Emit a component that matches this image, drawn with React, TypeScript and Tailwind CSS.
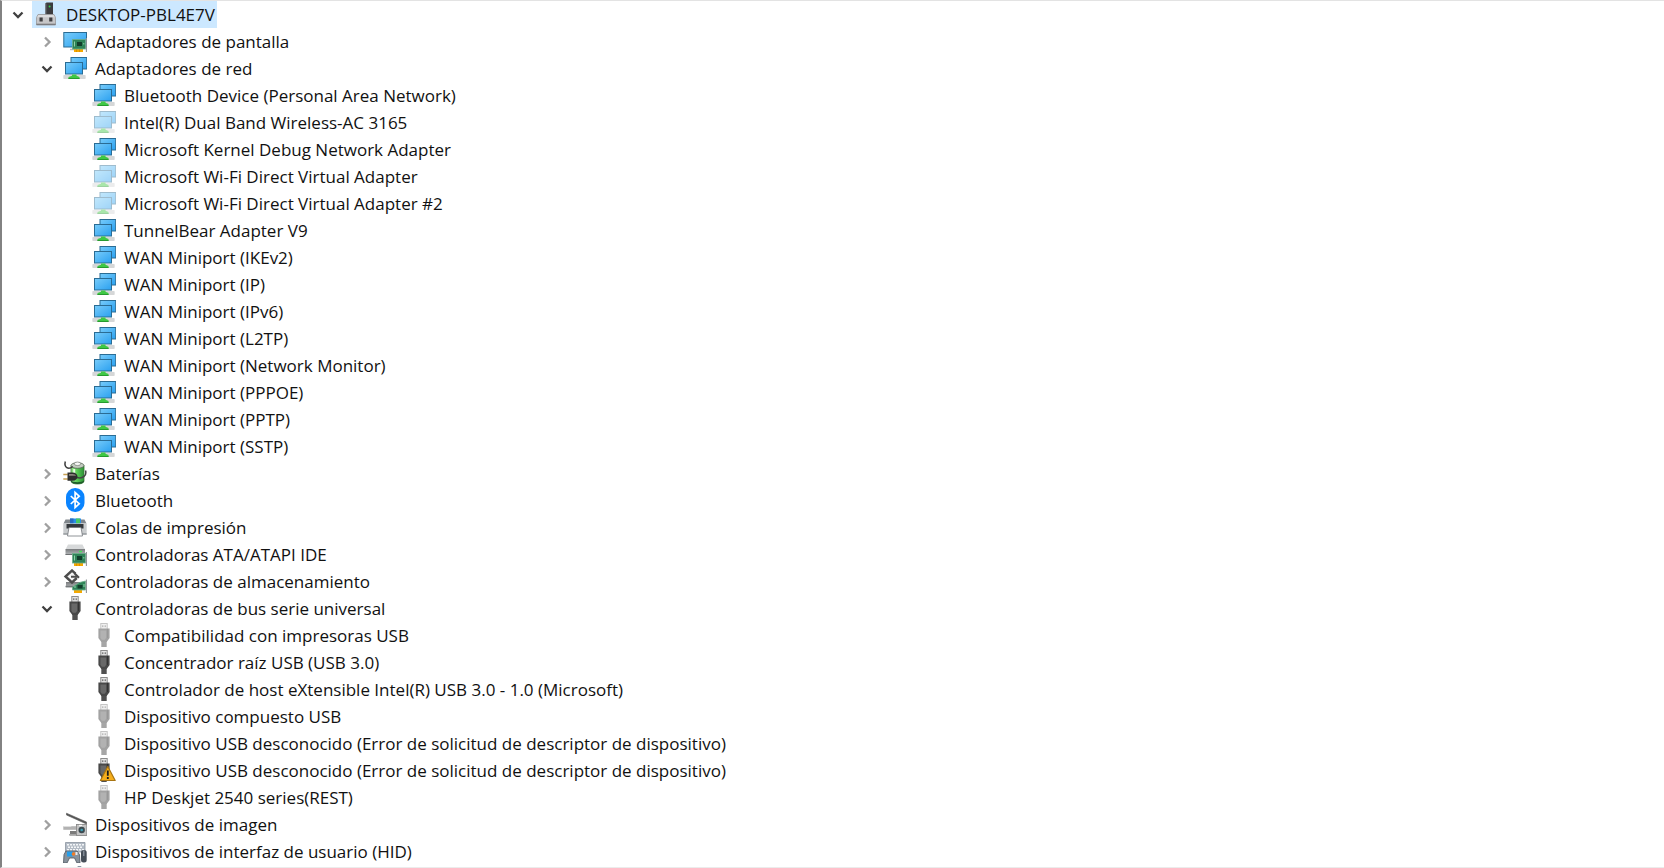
import { useState } from "react"
import type { ReactNode } from "react"
import { clsx } from "clsx"

type IconName =
  | "computer"
  | "display"
  | "network"
  | "battery"
  | "bluetooth"
  | "printer"
  | "ide"
  | "storage"
  | "usb"
  | "usbWarning"
  | "imaging"
  | "hid"
  | "sound"

interface DeviceNode {
  label: string
  icon: IconName
  faded?: boolean
  expanded?: boolean
  children?: DeviceNode[]
}

const categories: DeviceNode[] = [
  { label: "Adaptadores de pantalla", icon: "display", children: [] },
  {
    label: "Adaptadores de red",
    icon: "network",
    expanded: true,
    children: [
      { label: "Bluetooth Device (Personal Area Network)", icon: "network" },
      { label: "Intel(R) Dual Band Wireless-AC 3165", icon: "network", faded: true },
      { label: "Microsoft Kernel Debug Network Adapter", icon: "network" },
      { label: "Microsoft Wi-Fi Direct Virtual Adapter", icon: "network", faded: true },
      { label: "Microsoft Wi-Fi Direct Virtual Adapter #2", icon: "network", faded: true },
      { label: "TunnelBear Adapter V9", icon: "network" },
      { label: "WAN Miniport (IKEv2)", icon: "network" },
      { label: "WAN Miniport (IP)", icon: "network" },
      { label: "WAN Miniport (IPv6)", icon: "network" },
      { label: "WAN Miniport (L2TP)", icon: "network" },
      { label: "WAN Miniport (Network Monitor)", icon: "network" },
      { label: "WAN Miniport (PPPOE)", icon: "network" },
      { label: "WAN Miniport (PPTP)", icon: "network" },
      { label: "WAN Miniport (SSTP)", icon: "network" },
    ],
  },
  { label: "Baterías", icon: "battery", children: [] },
  { label: "Bluetooth", icon: "bluetooth", children: [] },
  { label: "Colas de impresión", icon: "printer", children: [] },
  { label: "Controladoras ATA/ATAPI IDE", icon: "ide", children: [] },
  { label: "Controladoras de almacenamiento", icon: "storage", children: [] },
  {
    label: "Controladoras de bus serie universal",
    icon: "usb",
    expanded: true,
    children: [
      { label: "Compatibilidad con impresoras USB", icon: "usb", faded: true },
      { label: "Concentrador raíz USB (USB 3.0)", icon: "usb" },
      { label: "Controlador de host eXtensible Intel(R) USB 3.0 - 1.0 (Microsoft)", icon: "usb" },
      { label: "Dispositivo compuesto USB", icon: "usb", faded: true },
      {
        label: "Dispositivo USB desconocido (Error de solicitud de descriptor de dispositivo)",
        icon: "usb",
        faded: true,
      },
      {
        label: "Dispositivo USB desconocido (Error de solicitud de descriptor de dispositivo)",
        icon: "usbWarning",
      },
      { label: "HP Deskjet 2540 series(REST)", icon: "usb", faded: true },
    ],
  },
  { label: "Dispositivos de imagen", icon: "imaging", children: [] },
  { label: "Dispositivos de interfaz de usuario (HID)", icon: "hid", children: [] },
  { label: "", icon: "sound" },
]

const root: DeviceNode = {
  label: "DESKTOP-PBL4E7V",
  icon: "computer",
  expanded: true,
  children: categories,
}

// Small green expansion card shared by several icons
function Card({ y }: { y: number }) {
  return (
    <g transform={`translate(0 ${y})`}>
      <rect x="11" y="8.5" width="9" height="3.5" fill="#f5a800" />
      <path d="M13.5 9v3M16.5 9v3" stroke="#c97f00" strokeWidth="0.6" />
      <rect x="9.5" y="-0.5" width="13" height="9.5" fill="#2f8458" stroke="#6fae8c" strokeWidth="0.8" />
      <rect x="14" y="2" width="5" height="4" fill="#123d2b" />
      <path d="M11.5 1.5v5M20.8 3v1.5" stroke="#8fd0a8" strokeWidth="1" />
      <path d="M23.4 -2v14" stroke="#8e9396" strokeWidth="1.1" />
    </g>
  )
}

function UsbPlug() {
  return (
    <g>
      <rect x="8.8" y="0.5" width="6.4" height="6" fill="#e4e4e4" stroke="#8c8c8c" />
      <path d="M10.8 2.3v1.8M13.2 2.3v1.8" stroke="#555" strokeWidth="1" />
      <path d="M9.3 17h5.4v7H9.3z" fill="#505050" />
      <path d="M6.4 5.5h11.2v9.5l-3 4H9.4l-3-4z" fill="#484848" />
      <path d="M8.4 7.5h5.8v7.3l-1.4 2h-3l-1.4-2z" fill="#686868" />
      <path d="M15.5 6v9" stroke="#333" strokeWidth="1" />
    </g>
  )
}

const drawings: Record<IconName, ReactNode> = {
  computer: (
    <>
      <path d="M12.5 0.5h6.5v12h-7.5v-11z" fill="#3c3c3f" />
      <path d="M12 1.5v11" stroke="#66666a" />
      <circle cx="15.6" cy="4.6" r="1" fill="#35d04a" />
      <path d="M4 12.5h16l1.5 3V23h-19v-7.5z" fill="#c6c6c8" stroke="#98989b" strokeWidth="0.8" />
      <path d="M4.3 13h15.4l1 2.3H3.3z" fill="#dcdcde" />
      <path d="M2.5 22.3h19" stroke="#77777a" strokeWidth="1.2" />
      <rect x="5.5" y="15.5" width="3.2" height="4" fill="#3f3f42" />
      <rect x="15.2" y="15.5" width="3.2" height="4" fill="#3f3f42" />
    </>
  ),
  display: (
    <>
      <rect x="0.8" y="3.5" width="22.7" height="14.5" fill="url(#screen)" stroke="#2a6c94" />
      <path d="M7 20.5h5" stroke="#b8b8b8" strokeWidth="1.5" />
      <Card y={11} />
    </>
  ),
  network: (
    <>
      <rect x="8" y="1.5" width="15.7" height="11.5" fill="url(#screen)" stroke="#2a6c94" />
      <rect x="2.5" y="6.5" width="17" height="11.5" fill="url(#screen)" stroke="#2a6c94" />
      <path d="M0.5 21h22" stroke="#c4c6c7" strokeWidth="3.4" />
      <path d="M0.5 21h22" stroke="#e6e8e8" strokeWidth="1" />
      <path d="M9 18.5h4.500v1.3l3 1.2v2h-11v-2l3.500-1.2z" fill="#3fc845" />
      <path d="M5.5 22.5h11" stroke="#279a30" />
    </>
  ),
  battery: (
    <>
      <path d="M8 4.5h13v15.5c0 4-13 4-13 0z" fill="url(#cell)" stroke="#377a36" strokeWidth="0.8" />
      <path d="M8 19.5c2 2.2 11 2.2 13 0v1.200c-2 3-11 3-13 0z" fill="#1f5a2a" />
      <ellipse cx="14.5" cy="4.5" rx="6.5" ry="2.8" fill="#c2ccbf" stroke="#576355" strokeWidth="0.8" />
      <ellipse cx="14.5" cy="2.800" rx="3.200" ry="1.8" fill="#f6f7f5" stroke="#656c63" strokeWidth="0.6" />
      <path d="M11.2 8v4" stroke="#e4ffe0" strokeWidth="2" />
      <path d="M14 16.500c6 1.500 10-2 8.500-7" fill="none" stroke="#454545" strokeWidth="1.500" />
      <path d="M2.300 0.500c-1.500 6 3 8.500 7.500 5" fill="none" stroke="#3d3d3d" strokeWidth="1.500" />
      <path d="M0.300 13.500h4.500M0.300 18h4.500" stroke="#c8a054" strokeWidth="1.500" />
      <path d="M4.500 11.500h5c3 0 5 2 5 4.200s-2 4.100-5 4.100h-5z" fill="#2d2d2d" />
      <path d="M6 13h3.500c2 0 3 .8 3.500 1.800H6z" fill="#8b847d" />
    </>
  ),
  bluetooth: (
    <>
      <rect x="3" y="0" width="18.500" height="24" rx="9" ry="9" fill="#0a84ff" />
      <path
        d="M7.800 8l8.400 7.800-4.100 3.700V4.500l4.100 3.700L7.800 16"
        fill="none"
        stroke="#fff"
        strokeWidth="1.700"
      />
    </>
  ),
  printer: (
    <>
      <path d="M2.500 4.500h19l2 4H0.500z" fill="#80868b" />
      <path d="M7 3.500h11v5H7z" fill="#2a90e8" />
      <path d="M7 3.500h3.500v5H7z" fill="#276cc0" />
      <path d="M13 3.500h4v5h-4z" fill="#45c968" />
      <path d="M0.300 8.500h23.400v11H0.300z" fill="#c9ccce" />
      <path d="M0.300 19h23.400" stroke="#888d91" strokeWidth="1.200" />
      <path d="M3.500 9h17v4.500h-17z" fill="#34383c" />
      <path d="M6 12.500h12l1.500 8.500H4.500z" fill="#fff" stroke="#75797d" strokeWidth="0.800" />
    </>
  ),
  ide: (
    <>
      <path d="M5 2.500h14.500l2.500 5H2.500z" fill="#d7d9da" />
      <path d="M2.500 7H22v6H2.500z" fill="url(#metal)" />
      <path d="M2.500 12.500H10" stroke="#6d7072" />
      <Card y={12} />
      <path d="M16 9.500h3" stroke="#47e158" strokeWidth="1.500" />
    </>
  ),
  storage: (
    <>
      <path d="M3 13h14v5.500H3z" fill="url(#metal)" />
      <path d="M2.500 17.500h8" stroke="#75797b" strokeWidth="1.500" />
      <path
        d="M13.800 9L9 13.500 2.500 7.500 9 1.500l3.500 3.200"
        fill="#f4f4f4"
        stroke="#4c4c4c"
        strokeWidth="2.400"
      />
      <path d="M8 7.800h7M11.500 4.200l4.500 4.500" stroke="#4c4c4c" strokeWidth="2" fill="none" />
      <path d="M11 20h8v4h-8z" fill="#f5a800" />
      <path d="M9.500 18l7-4.500 6-1.500v9h-13z" fill="#2f8458" stroke="#6fae8c" strokeWidth="0.800" />
      <path d="M14.500 16h5v3.500h-5z" fill="#123d2b" />
      <path d="M21 15v3M12 17v2" stroke="#8fd0a8" />
      <path d="M23.400 10.500V24" stroke="#8e9396" strokeWidth="1.100" />
    </>
  ),
  usb: <UsbPlug />,
  usbWarning: (
    <>
      <UsbPlug />
      <path d="M15.800 8.500l7.400 14H8.400z" fill="#f6ae1c" stroke="#a87412" strokeWidth="1.200" strokeLinejoin="round" />
      <path d="M15.800 12.500v5.300M15.800 19v2" stroke="#1b1b1b" strokeWidth="1.800" />
    </>
  ),
  imaging: (
    <>
      <path d="M3.500 1.200L23.500 10v2L3.500 3z" fill="#555" stroke="#555" strokeWidth="0.600" />
      <path d="M0.300 14.200H13v3.600H0.300z" fill="#b2b2b2" />
      <path d="M0.300 14.500h8" stroke="#dedede" />
      <path d="M7 19h6.500v4.500H7z" fill="#7b7b7b" />
      <path d="M6 22.800h8" stroke="#aaa" strokeWidth="1.500" />
      <rect x="13.500" y="12.500" width="10.300" height="11" fill="#c3c3c3" stroke="#898989" strokeWidth="0.900" />
      <path d="M16 13.500h3" stroke="#f5f5f5" strokeWidth="1.300" />
      <circle cx="18.700" cy="18" r="3.200" fill="#3c4a50" />
      <circle cx="18.700" cy="18" r="1.300" fill="#3c9fb4" />
    </>
  ),
  hid: (
    <>
      <path d="M2.500 3.500h19.500V13H2.500z" fill="#b3bbc5" stroke="#8b949f" strokeWidth="0.800" />
      <path d="M4 5.800h17M5 8.300h15M4 10.800h17" stroke="#f3f5f7" strokeWidth="1.400" strokeDasharray="2 1" />
      <path
        d="M3 12h11l2.500 3.500L17 24h-3l-2.500-5h-5L4 24H0.500l.5-8.500z"
        fill="#88929c"
        stroke="#4b545e"
        strokeWidth="0.800"
      />
      <path d="M4 12.500h5.500v5H4z" fill="#269ee9" />
      <circle cx="10.500" cy="15" r="1.800" fill="#f17b28" />
      <path d="M12.500 13h2v3h-2z" fill="#e8ecef" />
      <rect x="18" y="11" width="5.700" height="12.500" rx="2.500" fill="#454e58" />
      <path d="M20.800 11.500V17" stroke="#909aa5" strokeWidth="1.200" />
    </>
  ),
  sound: <path d="M15 0h3l1 2v20l-7-6V4z" fill="#8b95a3" />,
}

function Icon({ name, faded }: { name: IconName; faded?: boolean }) {
  return (
    <svg
      viewBox="0 0 24 24"
      className={clsx("mt-px size-6 shrink-0 self-start", faded && (name === "usb" ? "opacity-50" : "opacity-45"))}
      aria-hidden="true"
    >
      {drawings[name]}
    </svg>
  )
}

function TreeItem({ node, level = 0 }: { node: DeviceNode; level?: number }) {
  const [open, setOpen] = useState(Boolean(node.expanded))
  const selected = level === 0

  return (
    <li role="treeitem" aria-expanded={node.children ? open : undefined} aria-selected={selected}>
      <div className="flex h-[27px] items-center">
        {node.children ? (
          <button
            type="button"
            aria-label={node.label}
            onClick={() => setOpen(!open)}
            className="mr-0.5 flex h-full w-6 shrink-0 items-center justify-center"
          >
            <svg viewBox="0 0 12 12" className="size-3" fill="none" strokeWidth="2.300">
              {open ? (
                <path d="M1.500 3.500L6 8l4.500-4.500" stroke="#404040" />
              ) : (
                <path d="M4 1.500L8.500 6 4 10.500" stroke="#a0a0a0" />
              )}
            </svg>
          </button>
        ) : (
          <span className="w-[26px] shrink-0" />
        )}
        <span className={clsx("flex h-full items-center gap-2 pr-0.5 pl-0.5", selected && "bg-[#cce8ff]")}>
          <Icon name={node.icon} faded={node.faded} />
          <span className="whitespace-nowrap">{node.label}</span>
        </span>
      </div>
      {open && node.children && node.children.length > 0 && (
        <ul role="group" className="pl-[29px]">
          {node.children.map((child, index) => (
            <TreeItem key={index} node={child} level={level + 1} />
          ))}
        </ul>
      )}
    </li>
  )
}

export default function App() {
  return (
    <main className="h-screen overflow-hidden border-t border-b border-l-2 border-t-[#e3e3e3] border-b-[#ececec] border-l-[#828282] bg-white pl-1 font-['Open_Sans','Noto_Sans',sans-serif] text-[17px] leading-6 text-[#111]">
      <svg className="absolute size-0" aria-hidden="true">
        <defs>
          <linearGradient id="screen" x1="0" y1="0" x2="1" y2="1">
            <stop offset="0" stopColor="#78ccfa" />
            <stop offset="1" stopColor="#2aa0f0" />
          </linearGradient>
          <linearGradient id="cell" x1="0" y1="0" x2="1" y2="0">
            <stop offset="0" stopColor="#9ae88c" />
            <stop offset="0.500" stopColor="#56c952" />
            <stop offset="1" stopColor="#2c9036" />
          </linearGradient>
          <linearGradient id="metal" x1="0" y1="0" x2="0" y2="1">
            <stop offset="0" stopColor="#77797b" />
            <stop offset="1" stopColor="#b9bcbe" />
          </linearGradient>
        </defs>
      </svg>
      <ul role="tree">
        <TreeItem node={root} />
      </ul>
    </main>
  )
}
